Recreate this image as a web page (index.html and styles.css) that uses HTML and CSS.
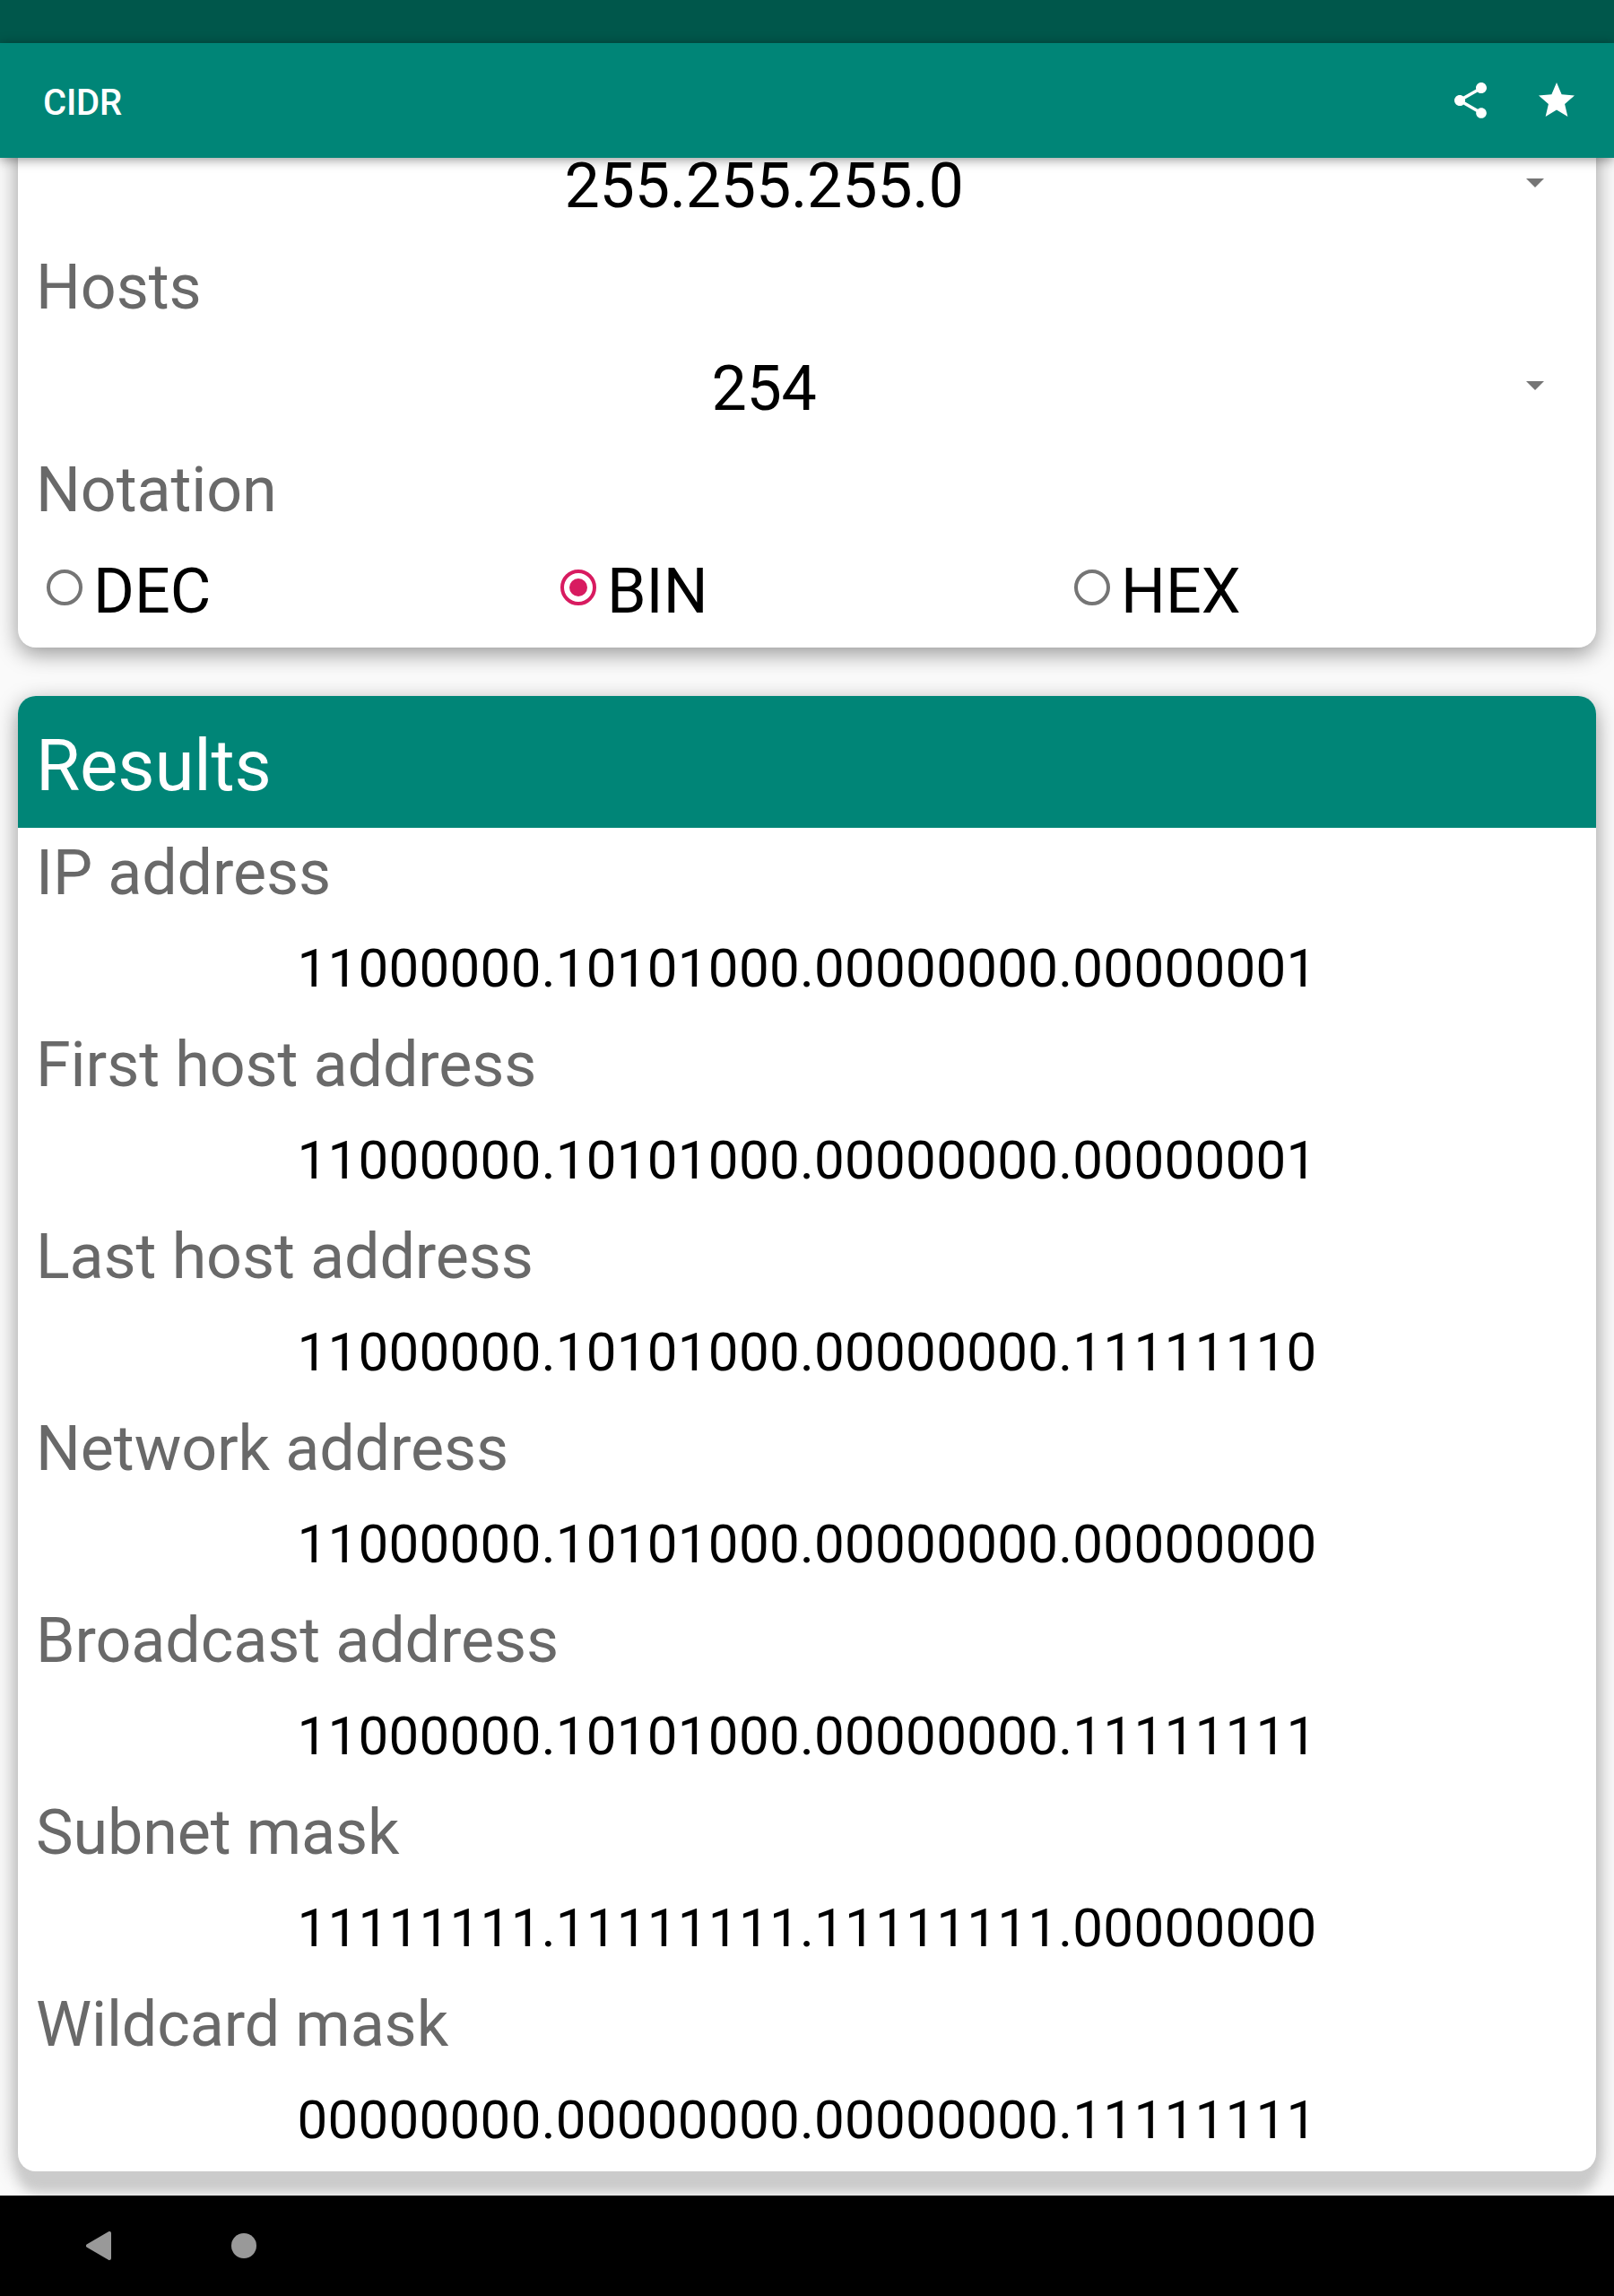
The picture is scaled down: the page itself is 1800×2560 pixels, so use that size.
FILE: index.html
```html
<!DOCTYPE html>
<html lang="en">
<head>
    <meta charset="utf-8">
    <title>CIDR</title>
    <link rel="stylesheet" href="styles.css">
</head>
<body>
    <div class="status-bar"></div>
    <header class="app-bar">
        <h1 class="title">CIDR</h1>
        <svg class="action" viewBox="0 0 24 24"><path d="M18 16.08c-.76 0-1.44.3-1.96.77L8.91 12.7c.05-.23.09-.46.09-.7s-.04-.47-.09-.7l7.05-4.11c.54.5 1.25.81 2.04.81 1.66 0 3-1.34 3-3s-1.34-3-3-3-3 1.34-3 3c0 .24.04.47.09.7L8.04 9.81C7.5 9.31 6.79 9 6 9c-1.66 0-3 1.34-3 3s1.34 3 3 3c.79 0 1.5-.31 2.04-.81l7.12 4.16c-.05.21-.08.43-.08.65 0 1.61 1.31 2.92 2.92 2.92s2.92-1.31 2.92-2.92-1.31-2.92-2.92-2.92z"/></svg>
        <svg class="action" viewBox="0 0 24 24"><path d="M12 17.27L18.18 21l-1.64-7.03L22 9.24l-7.19-.61L12 2 9.19 8.63 2 9.24l5.46 4.73L5.82 21z"/></svg>
    </header>

    <main class="content">
        <section class="card form">
            <div class="spinner">
                <span class="selected">255.255.255.0</span>
                <svg class="arrow" viewBox="0 0 20 10"><path d="M0 0h20L10 10z"/></svg>
            </div>
            <div class="label">Hosts</div>
            <div class="spinner">
                <span class="selected">254</span>
                <svg class="arrow" viewBox="0 0 20 10"><path d="M0 0h20L10 10z"/></svg>
            </div>
            <div class="label">Notation</div>
            <div class="radio-group">
                <div class="radio"><span class="circle"></span>DEC</div>
                <div class="radio checked"><span class="circle"></span>BIN</div>
                <div class="radio"><span class="circle"></span>HEX</div>
            </div>
        </section>

        <section class="card results">
            <h2 class="card-title">Results</h2>
            <div class="label">IP address</div>
            <div class="value">11000000.10101000.00000000.00000001</div>
            <div class="label">First host address</div>
            <div class="value">11000000.10101000.00000000.00000001</div>
            <div class="label">Last host address</div>
            <div class="value">11000000.10101000.00000000.11111110</div>
            <div class="label">Network address</div>
            <div class="value">11000000.10101000.00000000.00000000</div>
            <div class="label">Broadcast address</div>
            <div class="value">11000000.10101000.00000000.11111111</div>
            <div class="label">Subnet mask</div>
            <div class="value">11111111.11111111.11111111.00000000</div>
            <div class="label">Wildcard mask</div>
            <div class="value">00000000.00000000.00000000.11111111</div>
        </section>
    </main>

    <nav class="nav-bar">
        <svg class="nav-back" viewBox="0 0 28 32"><path d="M26 2v28L2 16z"/></svg>
        <span class="nav-home"></span>
    </nav>
</body>
</html>
```
FILE: styles.css
```css
body {
    margin: 0;
    height: 2560px;
    display: flex;
    flex-direction: column;
    overflow: hidden;
    background: #fafafa;
    color: #000;
    font-family: Roboto, sans-serif;
    font-size: 70px;
}
.status-bar {
    height: 48px;
    flex: none;
    background: #00574b;
}

/* app bar */
.app-bar {
    position: relative;
    z-index: 1;
    flex: none;
    box-sizing: border-box;
    height: 128px;
    padding: 0 40px 0 48px;
    display: flex;
    align-items: center;
    gap: 48px;
    background: #008577;
    box-shadow: 0 2px 12px rgba(0, 0, 0, 0.42);
}
.title {
    flex: 1;
    margin: 0;
    padding-top: 4px;
    color: #fff;
    font-size: 40px;
    font-weight: 500;
    letter-spacing: -0.2px;
}
.action {
    width: 48px;
    height: 48px;
    fill: #fff;
}

/* cards */
.content {
    flex: 1;
    min-height: 0;
    overflow: hidden;
    padding: 0 20px;
}
.card {
    border-radius: 20px;
    background: #fff;
    box-shadow: 0 7px 24px rgba(0, 0, 0, 0.4);
}
.form {
    margin-top: -65px;
    padding: 40px 20px 6px;
}
.form .label,
.spinner,
.radio-group {
    height: 113px;
    line-height: 113px;
}
.label {
    color: #696969;
    letter-spacing: -0.1px;
}
.spinner {
    display: flex;
}
.selected {
    flex: 1;
    text-align: center;
    letter-spacing: -0.3px;
}
.arrow {
    width: 20px;
    height: 10px;
    margin: 48px 38px 0;
    fill: #757575;
}
.radio-group {
    display: grid;
    grid-template-columns: repeat(3, 573px);
}
.radio {
    display: flex;
}
.circle {
    box-sizing: border-box;
    width: 40px;
    height: 40px;
    margin: 32px 12px 0;
    border: 4px solid #757575;
    border-radius: 50%;
}
.checked .circle {
    padding: 6px;
    border-color: #d81b60;
    background: #d81b60 content-box;
}

/* results */
.results {
    margin-top: 54px;
    box-shadow: 0 26px 14px -3px #cbcbcb, 0 7px 24px rgba(0, 0, 0, 0.4);
}
.card-title {
    margin: 0;
    padding: 9px 20px 0;
    border-radius: 20px 20px 0 0;
    background: #008577;
    color: #fff;
    font-size: 80px;
    font-weight: 400;
    line-height: 138px;
    letter-spacing: -0.2px;
}
.results .label {
    height: 100px;
    padding: 0 20px;
    line-height: 100px;
}
.value {
    height: 114px;
    font-size: 60px;
    line-height: 114px;
    letter-spacing: 0.3px;
    text-align: center;
}

/* system navigation */
.nav-bar {
    position: relative;
    flex: none;
    height: 112px;
    padding-left: 96px;
    display: flex;
    align-items: center;
    gap: 134px;
    background: #000;
}
.nav-back {
    width: 28px;
    height: 32px;
    fill: #999;
    stroke: #999;
    stroke-width: 4px;
    stroke-linejoin: round;
}
.nav-home {
    width: 28px;
    height: 28px;
    border-radius: 50%;
    background: #999;
}
```
